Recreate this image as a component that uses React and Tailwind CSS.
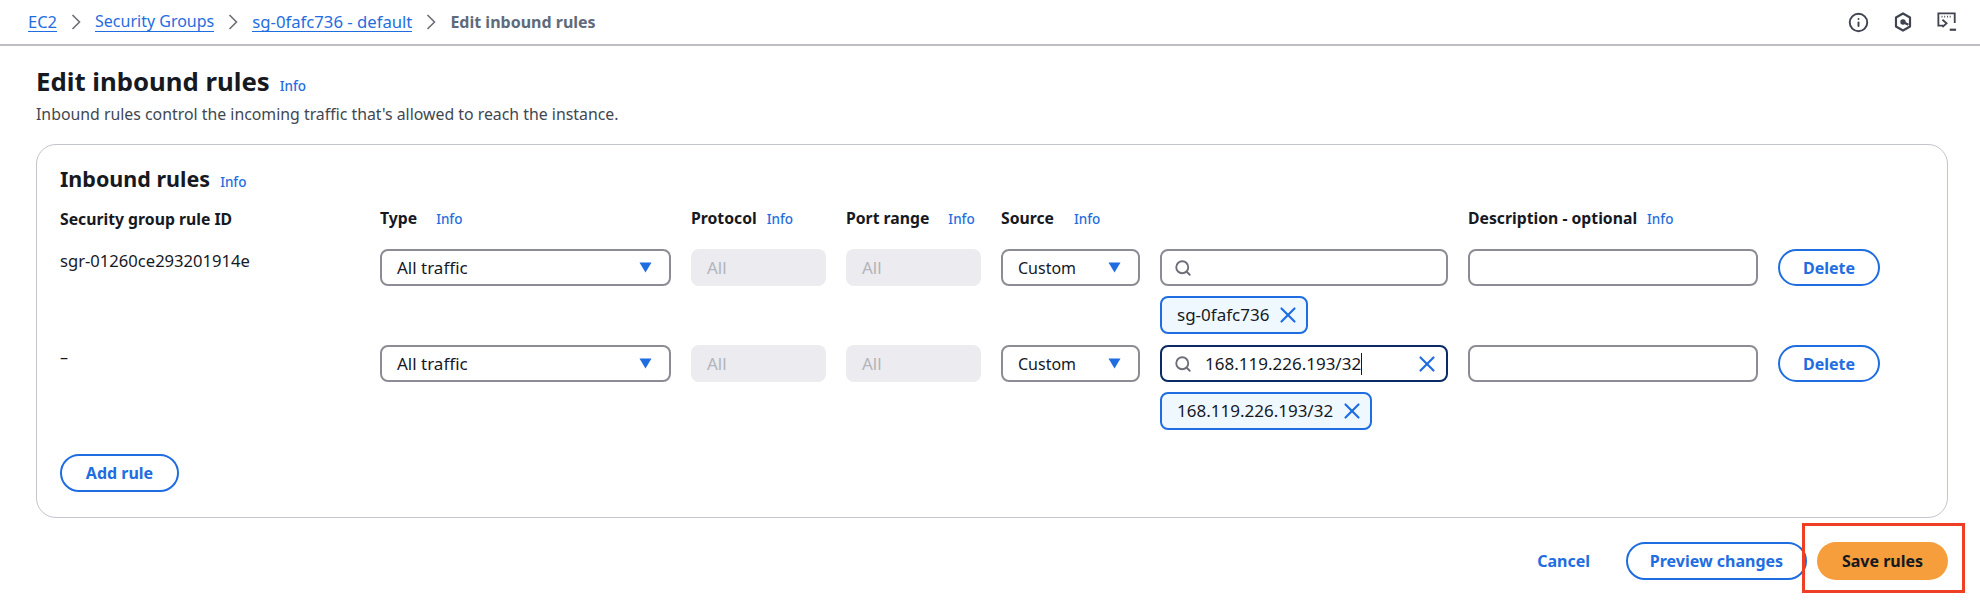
import { Info as InfoIcon, Search, X } from "lucide-react"

function InfoLink({ className = "" }) {
  return <a className={`text-[13.5px] font-medium text-[#1f6de0] ${className}`}>Info</a>
}

function HeaderCell({ label, gap = "ml-2" }) {
  return (
    <div className="flex items-baseline">
      <span className="text-[15.75px] font-bold text-[#16191f]">{label}</span>
      <InfoLink className={gap} />
    </div>
  )
}

function Caret() {
  return (
    <svg width="13" height="11" viewBox="0 0 13 11">
      <path d="M0.5 0.5h12L6.500 10.500z" fill="#1f6de0" />
    </svg>
  )
}

function SelectBox({ label, textSize = "text-[16px]" }) {
  return (
    <div className={`flex h-[37px] items-center justify-between rounded-lg border-2 border-[#8c8c94] pl-[15px] pr-[17px] ${textSize} text-[#16191f]`}>
      <span>{label}</span>
      <Caret />
    </div>
  )
}

function DisabledBox() {
  return (
    <div className="flex h-[37px] items-center rounded-lg bg-[#ebebf0] pl-[16px] text-[17px] text-[#b4b4bb]">
      All
    </div>
  )
}

function DeleteButton() {
  return (
    <button className="h-[37px] w-full rounded-full border-2 border-[#1f6de0] text-[16px] font-bold text-[#1f6de0]">
      Delete
    </button>
  )
}

function Chip({ label }) {
  return (
    <div className="mt-[10px] flex h-[38px] w-fit items-center gap-[6px] rounded-lg border-2 border-[#1f6de0] bg-[#f0f8ff] pl-[15px] pr-[5px] text-[17px] text-[#16191f]">
      <span>{label}</span>
      <X className="h-[26px] w-[26px] text-[#1f6de0]" strokeWidth={2} />
    </div>
  )
}

function HexIcon() {
  return (
    <svg width="18" height="20" viewBox="0 0 20 22" fill="none" stroke="#3f4450" strokeWidth="2.4">
      <path d="M10 1.5l7.8 4.500v10L10 20.500 2.200 16V6z" strokeLinejoin="round" />
      <circle cx="10" cy="11" r="3" fill="#3f4450" stroke="none" />
      <path d="M10 11l6 3" strokeWidth="2.6" />
    </svg>
  )
}

function TerminalIcon() {
  return (
    <svg width="20" height="20" viewBox="0 0 22 22" fill="none" stroke="#3f4450" strokeWidth="2">
      <path d="M7 15H1.500V1.500h18V12" />
      <path d="M5 5h1M8 5h1M11 5h1M14 5h1" strokeWidth="2" />
      <path d="M6 8.500l4.500 4-4.500 4" />
      <path d="M14 19.500h7" strokeWidth="2.4" />
    </svg>
  )
}

function BreadcrumbLink({ children, size = "text-[16.5px]" }) {
  return <a className={`border-b border-[#1f6de0] ${size} leading-[19px] text-[#1f6de0]`}>{children}</a>
}

function Chevron() {
  return (
    <svg width="10" height="16" viewBox="0 0 10 16" fill="none" stroke="#6e6e78" strokeWidth="1.6" className="mx-[14px]">
      <path d="M1.500 1l7 7-7 7" />
    </svg>
  )
}

export default function App() {
  return (
    <div className="relative h-[606px] w-[1980px] overflow-hidden bg-white font-['Noto_Sans',sans-serif] text-[#16191f]">
      {/* top bar */}
      <div className="flex h-[46px] items-center justify-between border-b-2 border-[#bdbdc2] pl-[28px] pr-[23px]">
        <div className="flex items-center">
          <BreadcrumbLink>EC2</BreadcrumbLink>
          <Chevron />
          <BreadcrumbLink size="text-[16px]">Security Groups</BreadcrumbLink>
          <Chevron />
          <BreadcrumbLink size="text-[16.7px]">sg-0fafc736 - default</BreadcrumbLink>
          <Chevron />
          <span className="text-[16px] font-bold text-[#5f6b7a]">Edit inbound rules</span>
        </div>
        <div className="flex items-center gap-[25px]">
          <InfoIcon className="h-[21px] w-[21px] text-[#3f4450]" strokeWidth={2.2} />
          <HexIcon />
          <TerminalIcon />
        </div>
      </div>

      {/* page title */}
      <div className="px-[36px] pt-[17px]">
        <div className="flex items-baseline">
          <h1 className="text-[25.75px] font-bold leading-[36px]">Edit inbound rules</h1>
          <InfoLink className="ml-[10px]" />
        </div>
        <p className="mt-[5px] text-[15.85px] leading-[20px] text-[#414750]">
          Inbound rules control the incoming traffic that's allowed to reach the instance.
        </p>

        {/* card */}
        <div className="mt-[20px] h-[374px] w-[1912px] rounded-[20px] border border-[#c4c4cc] px-[23px] pt-[19px]">
          <div className="flex items-baseline">
            <h2 className="text-[21.5px] font-bold leading-[30px]">Inbound rules</h2>
            <InfoLink className="ml-[10px]" />
          </div>

          <div className="mt-[13px] grid grid-cols-[300px_291px_135px_135px_139px_288px_290px_102px] gap-x-[20px]">
            <div className="h-[42px] text-[15.75px] font-bold leading-[24px]">Security group rule ID</div>
            <HeaderCell label="Type" gap="ml-[19px]" />
            <HeaderCell label="Protocol" gap="ml-[10px]" />
            <HeaderCell label="Port range" gap="ml-[19px]" />
            <HeaderCell label="Source" gap="ml-[20px]" />
            <div />
            <HeaderCell label="Description - optional" gap="ml-[10px]" />
            <div />

            <div className="text-[16.6px] leading-[24px]">sgr-01260ce293201914e</div>
            <SelectBox label="All traffic" textSize="text-[17px]" />
            <DisabledBox />
            <DisabledBox />
            <SelectBox label="Custom" />
            <div className="h-[96px]">
              <div className="flex h-[37px] items-center rounded-lg border-2 border-[#8c8c94] pl-[12px]">
                <Search className="h-[18px] w-[18px] text-[#6e6e78]" strokeWidth={2.5} />
              </div>
              <Chip label="sg-0fafc736" />
            </div>
            <div className="h-[37px] rounded-lg border-2 border-[#8c8c94]" />
            <DeleteButton />

            <div className="text-[16px] leading-[24px]">–</div>
            <SelectBox label="All traffic" textSize="text-[17px]" />
            <DisabledBox />
            <DisabledBox />
            <SelectBox label="Custom" />
            <div>
              <div className="flex h-[37px] items-center rounded-lg border-2 border-[#0a2a66] pl-[12px] pr-[6px] text-[17px]">
                <Search className="h-[18px] w-[18px] shrink-0 text-[#6e6e78]" strokeWidth={2.5} />
                <span className="ml-[13px] border-r border-[#16191f] leading-[22px]">168.119.226.193/32</span>
                <X className="ml-auto h-[26px] w-[26px] text-[#1f6de0]" strokeWidth={2} />
              </div>
              <Chip label="168.119.226.193/32" />
            </div>
            <div className="h-[37px] rounded-lg border-2 border-[#8c8c94]" />
            <DeleteButton />
          </div>

          <button className="mt-[24px] h-[38px] w-[119px] rounded-full border-2 border-[#1f6de0] text-[16px] font-bold text-[#1f6de0]">
            Add rule
          </button>
        </div>

        {/* footer actions */}
        <div className="mt-[24px] flex w-[1912px] items-center justify-end">
          <a className="mr-[36px] text-[16px] font-bold text-[#1f6de0]">Cancel</a>
          <button className="h-[38px] w-[181px] rounded-full border-2 border-[#1f6de0] text-[16px] font-bold text-[#1f6de0]">
            Preview changes
          </button>
          <button className="ml-[10px] h-[38px] w-[131px] rounded-full bg-[#f59e3b] text-[16px] font-bold text-[#16191f]">
            Save rules
          </button>
        </div>
      </div>

      {/* red highlight annotation */}
      <div className="absolute left-[1802px] top-[523px] h-[70px] w-[163px] border-[3px] border-[#ee3f24]" />
    </div>
  )
}
